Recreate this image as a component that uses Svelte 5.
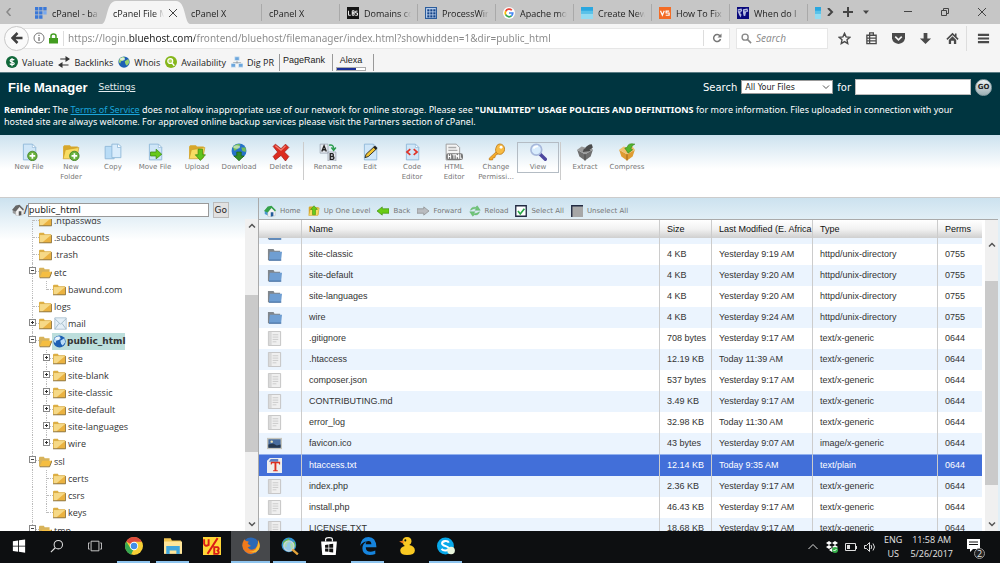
<script lang="ts">
	import { onMount } from 'svelte';

	let tabs = [
		{ title: 'cPanel - ba', icon: 'grid' },
		{ title: 'cPanel File M', active: true },
		{ title: 'cPanel X' },
		{ title: 'cPanel X' },
		{ title: 'Domains co', icon: 'lbs' },
		{ title: 'ProcessWir', icon: 'pw' },
		{ title: 'Apache mo', icon: 'google' },
		{ title: 'Create New', icon: 'sky' },
		{ title: 'How To Fix', icon: 'vs' },
		{ title: 'When do I', icon: 'map' }
	];

	let bookmarks = [
		{ label: 'Valuate', icon: 'dollar' },
		{ label: 'Backlinks', icon: 'swap' },
		{ label: 'Whois', icon: 'globe' },
		{ label: 'Availability', icon: 'avail' },
		{ label: 'Dig PR', icon: 'network' }
	];

	let tools = [
		[
			{ label: 'New File', icon: 'newfile' },
			{ label: 'New Folder', icon: 'newfolder' },
			{ label: 'Copy', icon: 'copy' },
			{ label: 'Move File', icon: 'move' },
			{ label: 'Upload', icon: 'upload' },
			{ label: 'Download', icon: 'download' },
			{ label: 'Delete', icon: 'delete' }
		],
		[
			{ label: 'Rename', icon: 'rename' },
			{ label: 'Edit', icon: 'edit' },
			{ label: 'Code Editor', icon: 'code' },
			{ label: 'HTML Editor', icon: 'html' },
			{ label: 'Change Permissi...', icon: 'key' },
			{ label: 'View', icon: 'view' }
		],
		[
			{ label: 'Extract', icon: 'extract' },
			{ label: 'Compress', icon: 'compress' }
		]
	];

	let actions = [
		{ label: 'Home', icon: 'home' },
		{ label: 'Up One Level', icon: 'up' },
		{ label: 'Back', icon: 'back' },
		{ label: 'Forward', icon: 'forward' },
		{ label: 'Reload', icon: 'reload' },
		{ label: 'Select All', icon: 'checked' },
		{ label: 'Unselect All', icon: 'unchecked' }
	];

	let tree = [
		{ name: '.htpasswds' },
		{ name: '.subaccounts' },
		{ name: '.trash' },
		{ name: 'etc', open: true },
		{ name: 'bawund.com', child: true, last: true },
		{ name: 'logs' },
		{ name: 'mail', more: true, icon: 'mail' },
		{ name: 'public_html', open: true, icon: 'world' },
		{ name: 'site', child: true, more: true },
		{ name: 'site-blank', child: true, more: true },
		{ name: 'site-classic', child: true, more: true },
		{ name: 'site-default', child: true, more: true },
		{ name: 'site-languages', child: true, more: true },
		{ name: 'wire', child: true, more: true, last: true },
		{ name: 'ssl', open: true },
		{ name: 'certs', child: true },
		{ name: 'csrs', child: true },
		{ name: 'keys', child: true, last: true },
		{ name: 'tmp', open: true }
	];

	const dir = 'httpd/unix-directory';
	const text = 'text/x-generic';

	let files = [
		{ name: '', size: '', date: '', type: '', perms: '', icon: 'dir' },
		{ name: 'site-classic', size: '4 KB', date: 'Yesterday 9:19 AM', type: dir, perms: '0755', icon: 'dir' },
		{ name: 'site-default', size: '4 KB', date: 'Yesterday 9:20 AM', type: dir, perms: '0755', icon: 'dir' },
		{ name: 'site-languages', size: '4 KB', date: 'Yesterday 9:20 AM', type: dir, perms: '0755', icon: 'dir' },
		{ name: 'wire', size: '4 KB', date: 'Yesterday 9:24 AM', type: dir, perms: '0755', icon: 'dir' },
		{ name: '.gitignore', size: '708 bytes', date: 'Yesterday 9:17 AM', type: text, perms: '0644', icon: 'doc' },
		{ name: '.htaccess', size: '12.19 KB', date: 'Today 11:39 AM', type: text, perms: '0644', icon: 'doc' },
		{ name: 'composer.json', size: '537 bytes', date: 'Yesterday 9:17 AM', type: text, perms: '0644', icon: 'doc' },
		{ name: 'CONTRIBUTING.md', size: '3.49 KB', date: 'Yesterday 9:17 AM', type: text, perms: '0644', icon: 'doc' },
		{ name: 'error_log', size: '32.98 KB', date: 'Today 11:30 AM', type: text, perms: '0644', icon: 'doc' },
		{ name: 'favicon.ico', size: '43 bytes', date: 'Yesterday 9:07 AM', type: 'image/x-generic', perms: '0644', icon: 'image' },
		{ name: 'htaccess.txt', size: '12.14 KB', date: 'Today 9:35 AM', type: 'text/plain', perms: '0644', icon: 'txt' },
		{ name: 'index.php', size: '2.36 KB', date: 'Yesterday 9:17 AM', type: text, perms: '0644', icon: 'doc' },
		{ name: 'install.php', size: '46.43 KB', date: 'Yesterday 9:17 AM', type: text, perms: '0644', icon: 'doc' },
		{ name: 'LICENSE.TXT', size: '18.68 KB', date: 'Yesterday 9:17 AM', type: text, perms: '0644', icon: 'doc' }
	];

	let apps = [
		{ name: 'Start', icon: 'windows', small: true },
		{ name: 'Search', icon: 'lens', small: true },
		{ name: 'Task View', icon: 'taskview', small: true },
		{ name: 'Chrome', icon: 'chrome', running: true },
		{ name: 'File Explorer', icon: 'explorer', running: true },
		{ name: 'Font tool', icon: 'vb' },
		{ name: 'Firefox', icon: 'firefox', running: true, active: true },
		{ name: 'Web search', icon: 'globesearch', running: true },
		{ name: 'Store', icon: 'store' },
		{ name: 'Edge', icon: 'edge', running: true },
		{ name: 'Cyberduck', icon: 'duck' },
		{ name: 'Skype', icon: 'skype', running: true }
	];

	let url = $state('https://login.bluehost.com/frontend/bluehost/filemanager/index.html?showhidden=1&dir=public_html');
	let path = $state('public_html');
	let selectedFile = $state('htaccess.txt');
	let selectedDir = $state('public_html');
	let treePane: HTMLElement;
	let filePane: HTMLElement;

	onMount(() => {
		treePane.scrollTop = 7;
		filePane.scrollTop = 15;
	});
</script>

{#snippet page(fill = '#cfe6f8')}
	<path d="M3 1h8l3 3v11H3z" {fill} stroke="#8fb8d8" stroke-width=".8" />
	<path d="M11 1v3h3z" fill="#fff" stroke="#8fb8d8" stroke-width=".6" />
{/snippet}

{#snippet goldFolder()}
	<path d="M1 3l1-1h5l1 1h6v10H1z" fill="#d8a72a" />
	<path d="M3 6l12-2-2 10H1z" fill="#f8dc62" stroke="#c99a25" stroke-width=".6" />
{/snippet}

{#snippet plus()}
	<circle cx="11" cy="11.5" r="4.2" fill="#69b13b" stroke="#3f7d22" stroke-width=".7" />
	<path d="M11 9v5M8.5 11.5h5" stroke="#fff" stroke-width="1.5" />
{/snippet}

{#snippet icon(name: string)}
	<svg class="icon" viewBox="0 0 16 16" aria-hidden="true">
		{#if name === 'grid'}
			<path d="M0 0h4.500v4.500H0zM5.500 0H10v4.500H5.500zM11 0h4.500v4.500H11zM0 5.500h4.500V10H0zM5.500 5.500H10V10H5.500zM0 11h4.500v4.500H0zM5.500 11H10v4.500H5.500z" fill="#3a78d8" />
			<path d="M11 5.500h4.500V10H11z" fill="#78a9ee" />
		{:else if name === 'lbs'}
			<path d="M0 0h16v16H0z" fill="#151515" />
			<path d="M2 5v6h3M7 5v6h2.500V8H7h2.500V5zM14 5.500h-2.500V8H14v3h-3" stroke="#fff" stroke-width="1.200" fill="none" />
		{:else if name === 'pw'}
			<path d="M0 0h16v16H0z" fill="#2c5d9c" />
			<path d="M1.500 1.500h13v13h-13z" fill="#c9dcf5" />
			<path d="M3 3h3v3H3zM7 3h3v3H7zM11 3h3v3h-3zM3 7h3v3H3zM7 7h3v3H7zM11 7h3v3h-3zM3 11h3v3H3zM7 11h3v3H7zM11 11h3v3h-3z" fill="#164487" />
		{:else if name === 'google'}
			<circle cx="8" cy="8" r="8" fill="#fff" />
			<g fill="none" stroke-width="2.300">
				<path d="M11.800 4.300A5 5 0 0 0 3.600 5.700" stroke="#ea4335" />
				<path d="M3.600 5.600a5 5 0 0 0 0 4.800" stroke="#fbbc05" />
				<path d="M3.600 10.300a5 5 0 0 0 7.700 1.500" stroke="#34a853" />
				<path d="M11.200 11.800A5 5 0 0 0 13 8H8" stroke="#4285f4" />
			</g>
		{:else if name === 'sky'}
			<path d="M0 0h16v16H0z" fill="#2aa7df" />
			<path d="M0 5h16v4H0z" fill="#58c2e9" />
			<path d="M0 9h16v7H0z" fill="#93dbf1" />
		{:else if name === 'vs'}
			<path d="M0 0h16v16H0z" fill="#f36c25" />
			<path d="M2 5l2.500 6L7 5M13.500 5.500H9.500V8h4v3H9" stroke="#fff" stroke-width="1.600" fill="none" />
		{:else if name === 'map'}
			<path d="M0 0h16v16H0z" fill="#0a0a7c" />
			<path d="M1 3l5-1 1 3-3 3 2 2-1 4-2-3-2-5zM8 3l6-1 1 4-3 1-1 5-2 0-1-4z" fill="#b5bbe0" />
			<path d="M2 5h3M10 5h3" stroke="#0a0a7c" />
		{:else if name === 'dollar'}
			<circle cx="8" cy="8" r="8" fill="#11683a" />
			<path d="M11 5.500C10 4 5.500 4 5.500 6.300S11 8 11 10s-4.500 2-6 .2M8 2.500v11" stroke="#fff" stroke-width="1.600" fill="none" />
		{:else if name === 'swap'}
			<path d="M3 4h8M5 12h9" stroke="#333" stroke-width="1.600" />
			<path d="M10 0l6 4-6 4zM6 8l-6 4 6 4z" fill="#333" />
		{:else if name === 'globe' || name === 'world'}
			<circle cx="8" cy="8" r="7.500" fill="#1c5fb4" />
			<path d="M2 4c3-3 6-3 7-2L7 6 4 7 3 10 1 8zM9 7l5-3 1 5-3 4-2-2z" fill={name === 'globe' ? '#9ad36b' : '#b9dcf7'} />
			<ellipse cx="6" cy="4" rx="3.500" ry="2" fill="#fff" opacity=".7" />
		{:else if name === 'avail'}
			<circle cx="8" cy="8" r="8" fill="#85b61b" />
			<circle cx="7" cy="6.700" r="3.300" stroke="#fff" stroke-width="1.600" fill="#b5da5e" />
			<path d="M9.500 9.500l3 3.500" stroke="#fff" stroke-width="2" />
		{:else if name === 'network'}
			<path d="M8 5v5M3 12V9h10v3" stroke="#7d8b96" fill="none" />
			<path d="M5 1h6v5H5zM0 10h6v5H0zM10 10h6v5h-6z" fill="#6ba6dd" stroke="#dbe8f3" />
		{:else if name === 'newfile'}
			{@render page()}
			{@render plus()}
		{:else if name === 'newfolder'}
			{@render goldFolder()}
			{@render plus()}
		{:else if name === 'copy'}
			<path d="M1 3h6l2 2v9H1z" fill="#b9dcf6" stroke="#8fb8d8" stroke-width=".8" />
			<path d="M7 1h6l2 2v10H7z" fill="#d9ecfb" stroke="#8fb8d8" stroke-width=".8" />
			<path d="M12 1v3h3" fill="#fff" stroke="#8fb8d8" stroke-width=".7" />
		{:else if name === 'move'}
			{@render page()}
			<path d="M4 8h5V5.500L14 10l-5 4v-2.500H4z" fill="#67c91b" stroke="#3d8b12" stroke-width=".7" />
		{:else if name === 'upload'}
			{@render goldFolder()}
			<path d="M9 5.500h4v5h2.500L11 15.500 6.500 10.500H9z" fill="#5fc41c" stroke="#3d8b12" stroke-width=".7" />
		{:else if name === 'download'}
			<circle cx="8" cy="7" r="6.600" fill="#2672c9" />
			<path d="M2.500 3.500c3-3 5-3 7-2L7 5 4 7zM10 4l4 0 0 4-3-1z" fill="#73bd56" />
			<ellipse cx="6" cy="3.500" rx="3" ry="1.500" fill="#fff" opacity=".5" />
			<path d="M6 8h4v3.500h2.500L8 15.800 3.500 11.500H6z" fill="#348d25" stroke="#1d6114" stroke-width=".6" />
		{:else if name === 'delete'}
			<path d="M3 1l5 4 4-4 3 3-4 4 4 4-3 4-4-5-5 4-2-3 4-4-4-5z" fill="#dc2c20" stroke="#9d1510" stroke-width=".6" />
			<path d="M3 2.500l5 4L12 2.500" stroke="#f48474" stroke-width="1" fill="none" />
		{:else if name === 'rename'}
			<path d="M1 1h7v8H1zM8 8h7v8H8z" fill="#e4e8ee" stroke="#9ca5b2" stroke-width=".7" />
			<path d="M2.500 7.500l2-5 2 5M3.200 6h2.600M10 9.500v5h2.300c1.300-.3 1.300-2.300 0-2.500H10h2c1-.3 1-2.300 0-2.500z" stroke="#222" stroke-width="1.200" fill="none" />
			<path d="M9 2q4-1 4 3M11 4l2 2.500L15 4" stroke="#2b9c4e" stroke-width="1.300" fill="none" />
		{:else if name === 'edit'}
			{@render page()}
			<path d="M3.500 13l1-3 7.500-7 2 2-7.500 7z" fill="#f2c532" stroke="#222" stroke-width=".8" />
			<path d="M11 4l2 2 1.500-1.500-2-2z" fill="#222" />
		{:else if name === 'code'}
			{@render page()}
			<path d="M6.500 5.500L3.500 8l3 2.500M9.500 5.500l3 2.500-3 2.500" stroke="#e03428" stroke-width="1.500" fill="none" />
		{:else if name === 'html'}
			<path d="M1 1h9l3 3v11H1z" fill="#f4f4f4" stroke="#999" stroke-width=".8" />
			<path d="M3 4h7M3 6.500h8" stroke="#aaa" stroke-width="1.200" />
			<rect x="1" y="9" width="15" height="6" rx="2" fill="#777" />
			<path d="M3 10v4M5 10v4M3 12h2M6.500 10.500h3M8 10.500V14M10 14v-3.500l1 1.500 1-1.500V14M13.500 10v3.500H15" stroke="#fff" stroke-width=".9" fill="none" />
		{:else if name === 'key'}
			<path d="M8.500 7.500L2 13.500V15h3l.5-2H7l.5-2L10 9.500" fill="#f5ab2b" stroke="#b97512" stroke-width=".6" />
			<path d="M9 2c2-2 5-1 6 1s1 4-1 6-5 1-6-1 0-4 1-6z" fill="#f8bb42" stroke="#b97512" stroke-width=".7" />
			<circle cx="12.500" cy="3.800" r="1.300" fill="#fff" />
		{:else if name === 'view'}
			<path d="M9.500 9.500l5 5" stroke="#4d479f" stroke-width="3" stroke-linecap="round" />
			<circle cx="6.500" cy="6" r="4.800" fill="#d8ecfd" stroke="#a8b9dc" stroke-width="1.500" />
			<path d="M4 5q1-2.500 4-2" stroke="#fff" stroke-width="1.500" fill="none" />
		{:else if name === 'extract' || name === 'compress'}
			{@const gold = name === 'compress'}
			<path d="M1 6l7 4 7-4-2 6-5 3.500L3 12z" fill={gold ? '#df9c32' : '#6f6f6f'} />
			<path d="M1 6l4-3 3 1 4-2 3 4-7 4z" fill={gold ? '#f0c06d' : '#999'} />
			<path d="M8 10v5.500" stroke={gold ? '#a8691c' : '#4d4d4d'} />
			{#if gold}
				<path d="M6 4.500L9 9l4-3-1.500-1Q12 2 15 1 9 -.5 8 4z" fill="#54b52d" stroke="#2f7c14" stroke-width=".5" />
			{:else}
				<path d="M6 8l1-3h1q2-4 6-4l1 3-3 2 1 1z" fill="#4b4b4b" />
			{/if}
		{:else if name === 'home' || name === 'roothome'}
			{@const root = name === 'roothome'}
			<path d="M1 8l4-5 4 5v7l-4-1-4-2z" fill={root ? '#999' : '#4b98cf'} />
			<path d="M5 9l5-6 5 5v6l-6 2-4-1z" fill="#f2f2f2" stroke="#aaa" stroke-width=".5" />
			<path d="M0 8l5-6 5-1 6 6-1.500 1.500L10 4 5 10z" fill={root ? '#666' : '#35a24b'} />
			<path d="M9 9.500h3.500v5L9 15.500z" fill={root ? '#555' : '#235c9b'} />
		{:else if name === 'up'}
			{@render goldFolder()}
			<path d="M8 1l4.500 5H10v7H6V6H3.500z" fill="#65ca1c" stroke="#3d8b12" stroke-width=".7" />
		{:else if name === 'back'}
			<path d="M0 8l7-5.500V5h9v6H7v2.500z" fill="#69cc14" stroke="#3c8d0c" stroke-width=".9" />
		{:else if name === 'forward'}
			<path d="M16 8L9 2.500V5H0v6h9v2.500z" fill="#b9bcc0" stroke="#888" stroke-width=".9" />
		{:else if name === 'reload'}
			<path d="M2 7q1-5 7-4l2-2 4 6-7 0 2-2Q6 4 2 7zM14 9q-1 5-7 4l-2 2-4-6h7l-2 2q4 1 8-2z" fill="#71c778" stroke="#4ca457" stroke-width=".5" />
		{:else if name === 'checked'}
			<path d="M1 1h14v14H1z" fill="#fff" stroke="#222b42" stroke-width="1.800" />
			<path d="M4 8l3 4 5.500-7" stroke="#28a745" stroke-width="2.200" fill="none" />
		{:else if name === 'unchecked'}
			<path d="M0 0h16v16H0z" fill="#a7a7a7" />
			<path d="M1 16V1h15" stroke="#222b42" stroke-width="1.800" fill="none" />
		{:else if name === 'folder'}
			<path d="M0 3l1-1h5l1 2h8v10H0z" fill="#dcae45" />
			<path d="M1 5h14v9H1z" fill="#f6d987" />
			<path d="M15 5v9H4z" fill="#eab241" />
			<path d="M0 14.500h15.500V5" stroke="#7d6027" fill="none" />
		{:else if name === 'openfolder'}
			<path d="M0 3l1-1h5l1 2h6v3L2 14H0z" fill="#d8b35a" />
			<path d="M4 7h12l-3 7H1z" fill="#f5be42" />
			<path d="M1 14.500h12L16 7" stroke="#7d6027" fill="none" />
		{:else if name === 'mail'}
			<path d="M1 1h14v14H1z" fill="#e4eff7" stroke="#a6bccb" />
			<path d="M1 2l7 7 7-7M1 15l5-7M15 15l-5-7" stroke="#a6bccb" stroke-width="1.200" fill="none" />
		{:else if name === 'dir'}
			<path d="M1 2h6l1 2h6v10H1z" fill="#80868c" />
			<path d="M3 5h13l-1 9.500H2z" fill="#6f9ed2" />
			<path d="M2 14h13.200" stroke="#41699c" />
		{:else if name === 'doc'}
			<path d="M1.500.5h13v15h-13z" fill="#efefef" stroke="#c2c2c2" />
			<path d="M2 1h3v14H2z" fill="#d9d9d9" />
			<path d="M6 4h6M6 6.500h6M6 9h6M6 11.500h4" stroke="#cbcbcb" />
		{:else if name === 'image'}
			<path d="M0 2h16v12H0z" fill="#c5c5bd" />
			<path d="M1.500 3.500h13v9h-13z" fill="#496d9e" />
			<path d="M1.500 9l5-1 4 2 4-1v3.500h-13z" fill="#26384f" />
			<circle cx="5" cy="6" r="1.300" fill="#f0e9bd" />
		{:else if name === 'txt'}
			<path d="M0 3l3-3h13v16H0z" fill="#eee" />
			<path d="M4 1h8v3H2z" fill="#5d80c5" />
			<path d="M4 4h10v3h-1l-.5-1.500H10V13h1.500v1h-5v-1H8V5.500H5.500L5 7H4z" fill="#dc3021" />
		{:else if name === 'windows'}
			<path d="M1 2.500l6-.8v6H1zM8 1.500l7-1v7.200H8zM1 8.500h6v6l-6-.8zM8 8.500h7v7.200l-7-1z" fill="#fff" />
		{:else if name === 'lens'}
			<circle cx="9.500" cy="6.500" r="4.800" stroke="#ddd" stroke-width="1.200" fill="none" />
			<path d="M6 10l-5 5" stroke="#ddd" stroke-width="1.300" />
		{:else if name === 'taskview'}
			<path d="M3.500 2.500h9v11h-9zM2 4.500H.5v7H2M14 4.500h1.500v7H14" stroke="#ddd" fill="none" />
		{:else if name === 'chrome'}
			<circle cx="8" cy="8" r="8" fill="#f8cf35" />
			<path d="M8 8L1.100 4A8 8 0 0 1 15 4.200H8z" fill="#dd4b3e" />
			<path d="M1.100 4L5 10l3 0-2.500 5.600A8 8 0 0 1 1.100 4z" fill="#36a853" />
			<circle cx="8" cy="8" r="3.700" fill="#fff" />
			<circle cx="8" cy="8" r="2.900" fill="#438ee8" />
		{:else if name === 'explorer'}
			<path d="M0 1h6l1 2h8v10H0z" fill="#f1c551" />
			<path d="M0 4h16v11H0z" fill="#ffe69a" />
			<path d="M2 8h12v7h-3v-3H5v3H2z" fill="#41a6dd" />
		{:else if name === 'vb'}
			<path d="M0 0h16v16H0z" fill="#ffd636" />
			<path d="M1 2v4q1 3 4 1V2M13 1L4 15M10 15V9h3q2 1.500 0 3 2 2 0 3z" stroke="#d91c16" stroke-width="1.700" fill="none" />
		{:else if name === 'firefox'}
			<circle cx="8" cy="8" r="7.500" fill="#2b68b6" />
			<path d="M2 2q-4 7 1 11 5 4 10 0 5-5 1-11 1 5-2 8-4 3-7-1l3-1-3-2 1-2Q3 4 2 2z" fill="#f07a1b" />
			<path d="M14 3q1 5-2 8-3 3-7 1 6 4 10-1 2-4-1-8z" fill="#f9b92e" />
		{:else if name === 'globesearch'}
			<circle cx="7" cy="7" r="6.500" fill="#3192d2" />
			<path d="M2 4l5-3 1 3-3 2 0 3-3-1zM8 6l4-2 1 4-4 4z" fill="#68bd45" />
			<circle cx="7" cy="8" r="4.500" fill="#d7edf7" fill-opacity=".6" stroke="#c5d4dc" stroke-width="1.200" />
			<path d="M10 11l5 4.500" stroke="#e3a33a" stroke-width="2" />
		{:else if name === 'store'}
			<path d="M1 4h14l-1 12H2z" fill="#fff" />
			<path d="M5 4V2q0-1.500 3-1.500T11 2v2" stroke="#fff" fill="none" />
			<path d="M4.500 7l3-.4v3h-3zM8.200 6.500l3.500-.5v3.600H8.200zM4.500 10.200h3v3l-3-.4zM8.200 10.200h3.500v3.500l-3.500-.4z" fill="#111" />
		{:else if name === 'edge'}
			<path d="M1 8Q2 0 8.500 0 15 0 15.500 9H6q0 4 4.500 4 2.500 0 4-1v3q-2 1-5 1Q3 16 3 10q0-4 4-6-4 0-6 4zm5-1.500h5Q11 3.500 8.500 3.500T6 6.500z" fill="#1684dd" />
		{:else if name === 'duck'}
			<path d="M4 4q0-4 4-4t4 4q0 2-2 3 5 1 5 5 0 4-7 4-6 0-6-4 0-3 4-4-2-1-2-4z" fill="#f9c922" />
			<path d="M1 4l4-1v3z" fill="#ee7c1f" />
			<circle cx="6.500" cy="3" r=".9" fill="#111" />
		{:else if name === 'skype'}
			<circle cx="7.500" cy="8" r="7.500" fill="#08a9ea" />
			<path d="M10.500 5C9.500 3 4.500 3.200 4.500 5.700S10.500 8 10.500 10s-4.500 3-6.500.5" stroke="#fff" stroke-width="1.800" fill="none" />
			<circle cx="12.500" cy="12" r="3.400" fill="#e8f5dc" />
		{/if}
	</svg>
{/snippet}

{#snippet scrollbar(top: number, size: number)}
	<div class="scrollbar">
		<button type="button" aria-label="Scroll up"><svg viewBox="0 0 8 8"><path d="M1 5.500l3-3 3 3" stroke-width="1.500" /></svg></button>
		<div class="track"><div class="thumb" style="top: {top}%; height: {size}%"></div></div>
		<button type="button" aria-label="Scroll down"><svg viewBox="0 0 8 8"><path d="M1 2.500l3 3 3-3" stroke-width="1.500" /></svg></button>
	</div>
{/snippet}

<div class="desktop">
	<div class="tabbar">
		<button class="tab-scroll" type="button" aria-label="Previous tabs">
			<svg class="line" viewBox="0 0 8 8"><path d="M5.500 0L2 4l3.500 4" stroke="#888" stroke-width="1.500" /></svg>
		</button>
		<div class="tabs">
			{#each tabs as tab}
				<button class="tab" class:active={tab.active} type="button">
					{#if tab.active}
						<svg class="tab-shape" viewBox="0 0 88 24" preserveAspectRatio="none"><path d="M0 24C6 22 4 1 14 1h60C84 1 82 22 88 24z" fill="#f5f5f5" /></svg>
					{/if}
					{#if tab.icon}{@render icon(tab.icon)}{/if}
					<span class="tab-title">{tab.title}</span>
					{#if tab.active}
						<svg class="line close" viewBox="0 0 8 8"><path d="M0 0l8 8M8 0L0 8" /></svg>
					{/if}
				</button>
			{/each}
			<button class="tab cut" type="button" aria-label="Next tab">{@render icon('sky')}</button>
		</div>
		<div class="tab-tools">
			<button type="button" aria-label="More tabs"><svg class="line bold" viewBox="0 0 8 8"><path d="M2 0l4 4-4 4" /></svg></button>
			<button type="button" aria-label="New tab"><svg class="line bold plus" viewBox="0 0 10 10"><path d="M5 0v10M0 5h10" /></svg></button>
			<button type="button" aria-label="List tabs"><svg class="line" viewBox="0 0 8 8"><path d="M1 2.500h6L4 6z" fill="#444" stroke="none" /></svg></button>
		</div>
		<div class="window-tools">
			<button type="button" aria-label="Minimize"><svg class="line" viewBox="0 0 8 8"><path d="M0 3.500h8" /></svg></button>
			<button type="button" aria-label="Restore"><svg class="line" viewBox="0 0 8 8"><path d="M.5 2.500h5v5h-5zM2.500 2.500v-2h5v5h-2" /></svg></button>
			<button type="button" aria-label="Close"><svg class="line" viewBox="0 0 8 8"><path d="M0 0l8 8M8 0L0 8" /></svg></button>
		</div>
	</div>

	<div class="navbar">
		<button class="go-back" type="button" aria-label="Back">
			<svg viewBox="0 0 12 12"><path d="M11.500 6H2M6.500 1L1.500 6l5 5" stroke="#3f3f3f" stroke-width="2.500" fill="none" /></svg>
		</button>
		<div class="urlbox">
			<svg class="info" viewBox="0 0 12 12"><circle cx="6" cy="6" r="5" stroke="#777" fill="none" /><path d="M6 5v4M6 2.800v1.300" stroke="#777" stroke-width="1.300" /></svg>
			<svg class="lock" viewBox="0 0 9 11"><path d="M2 5V3q0-2 2.500-2T7 3v2" stroke="#439d20" stroke-width="1.500" fill="none" /><path d="M0 5h9v5.500H0z" fill="#439d20" /></svg>
			<input class="url" aria-label="Address" bind:value={url} />
			<button class="refresh" type="button" aria-label="Reload page">
				<svg viewBox="0 0 10 10"><path d="M8 3A3.500 3.500 0 1 0 8.500 6" stroke="#777" stroke-width="1.500" fill="none" /><path d="M9.500.5v4h-4z" fill="#777" /></svg>
			</button>
		</div>
		<label class="searchbox">
			<svg viewBox="0 0 12 12"><circle cx="4.500" cy="4.500" r="3.300" stroke="#888" stroke-width="1.500" fill="none" /><path d="M7 7l4 4" stroke="#888" stroke-width="1.700" /></svg>
			<input placeholder="Search" aria-label="Search the web" />
		</label>
		<div class="nav-tools">
			<button type="button" aria-label="Bookmark"><svg viewBox="0 0 14 14"><path d="M7 1.500l1.700 3.700 4 .5-3 2.700.8 4L7 10.400l-3.500 2 .8-4-3-2.700 4-.5z" stroke="#4a4a4a" stroke-width="1.500" fill="none" /></svg></button>
			<button type="button" aria-label="Bookmarks list"><svg viewBox="0 0 14 14"><path d="M2 3.500h10v9H2zM2 6.500h10M2 9.500h10M5 3.500v9M5 3V1h4v2" stroke="#4a4a4a" stroke-width="1.400" fill="none" /></svg></button>
			<button type="button" aria-label="Pocket"><svg viewBox="0 0 14 14"><path d="M0 1h14v6q-1 5-7 6Q1 12 0 7z" fill="#4a4a4a" /><path d="M3.500 5L7 8.500 10.500 5" stroke="#f5f5f5" stroke-width="1.800" fill="none" /></svg></button>
			<button type="button" aria-label="Downloads"><svg viewBox="0 0 14 14"><path d="M5 1h4v6h4l-6 6-6-6h4z" fill="#4a4a4a" /></svg></button>
			<button type="button" aria-label="Home page"><svg viewBox="0 0 14 14"><path d="M1 8l6-6 6 6M10.500 1.500v4" stroke="#4a4a4a" stroke-width="1.700" fill="none" /><path d="M3 8.500l4-4 4 4V13H8.500V9.500h-3V13H3z" fill="#4a4a4a" /></svg></button>
			<button class="menu" type="button" aria-label="Menu"><svg viewBox="0 0 14 14"><path d="M1 3h12M1 7h12M1 11h12" stroke="#4a4a4a" stroke-width="2.400" /></svg></button>
		</div>
	</div>

	<div class="bookmarks">
		{#each bookmarks as mark}
			<a href="#top">{@render icon(mark.icon)}{mark.label}</a>
		{/each}
		<span class="rank">PageRank</span>
		<span class="alexa">Alexa<span class="meter"></span></span>
	</div>

	<header>
		<div class="title-row">
			<h1>File Manager</h1>
			<a class="settings" href="#settings">Settings</a>
			<form class="find">
				<label for="scope">Search</label>
				<span class="scope">
					<select id="scope"><option>All Your Files</option></select>
					<svg viewBox="0 0 8 8"><path d="M1 2.500l3 3 3-3" stroke="#555" fill="none" /></svg>
				</span>
				<label for="query">for</label>
				<input id="query" />
				<button type="button">GO</button>
			</form>
		</div>
		<p class="reminder">
			<b>Reminder:</b> The <a href="#terms">Terms of Service</a> does not allow inappropriate use of our network for online storage. Please see <b>"UNLIMITED" USAGE POLICIES AND DEFINITIONS</b> for more information. Files uploaded in connection with your<br />
			hosted site are always welcome. For approved online backup services please visit the Partners section of cPanel.
		</p>
	</header>

	<div class="toolbar">
		{#each tools as group}
			<div class="tool-group">
				{#each group as tool}
					<button class="tool" class:focused={tool.label === 'View'} type="button">
						{@render icon(tool.icon)}
						{tool.label}
					</button>
				{/each}
			</div>
		{/each}
	</div>

	<main>
		<aside>
			<form class="path">
				{@render icon('roothome')}
				<label for="path">/</label>
				<input id="path" bind:value={path} />
				<button type="button">Go</button>
			</form>
			<div class="pane">
				<ul class="tree" bind:this={treePane}>
					{#each tree as node}
						<li class:open={node.open}>
							<span class="guide" class:through={node.child}></span>
							{#if node.child}<span class="guide branch" class:last={node.last}>
								{#if node.more}<span class="toggle plus-sign"></span>{/if}
							</span>{:else if node.open || node.more}<span class="toggle root" class:plus-sign={node.more}></span>{/if}
							{@render icon(node.open ? 'openfolder' : 'folder')}
							<button
								class="node"
								class:selected={selectedDir === node.name}
								onclick={() => (selectedDir = node.name)}
								type="button"
							>
								{#if node.icon}{@render icon(node.icon)}{/if}{node.name}
							</button>
						</li>
					{/each}
				</ul>
				{@render scrollbar(22, 55)}
			</div>
		</aside>

		<section>
			<div class="actions">
				{#each actions as action}
					<button type="button">{@render icon(action.icon)}{action.label}</button>
				{/each}
			</div>
			<div class="pane files">
				<div class="file-list" bind:this={filePane}>
					<table>
						<thead>
							<tr>
								<th class="c-icon" aria-label="Icon"></th>
								<th>Name</th>
								<th class="c-size">Size</th>
								<th class="c-date">Last Modified (E. Africa S</th>
								<th class="c-type">Type</th>
								<th class="c-perms">Perms</th>
							</tr>
						</thead>
						<tbody>
							{#each files as file}
								<tr class:selected={file.name === selectedFile} onclick={() => (selectedFile = file.name)}>
									<td>{@render icon(file.icon)}</td>
									<td>{file.name}</td>
									<td>{file.size}</td>
									<td>{file.date}</td>
									<td>{file.type}</td>
									<td>{file.perms}</td>
								</tr>
							{/each}
						</tbody>
					</table>
				</div>
				{@render scrollbar(11, 77)}
			</div>
		</section>
	</main>

	<footer>
		{#each apps as app}
			<button
				class="app"
				class:small={app.small}
				class:running={app.running}
				class:active={app.active}
				aria-label={app.name}
				type="button"
			>
				{@render icon(app.icon)}
			</button>
		{/each}
		<div class="tray">
			<svg viewBox="0 0 12 12"><path d="M1.500 8L6 3.500 10.500 8" stroke="#ddd" fill="none" /></svg>
			<svg viewBox="0 0 12 12"><path d="M3 0l3 2-3 2-3-2zM9 0l3 2-3 2-3-2zM3 4l3 2-3 2-3-2zM9 4l3 2-3 2-3-2zM3 9l3-2 3 2-3 2z" fill="#fff" /><circle cx="9" cy="9" r="3" fill="#36b04a" /><path d="M7.500 9l1 1 2-2" stroke="#fff" fill="none" /></svg>
			<svg viewBox="0 0 12 12"><path d="M.5 2.500h10v7H.5zM11.500 5v3" stroke="#ddd" fill="none" /><path d="M2 4h3v4H2z" fill="#ddd" /></svg>
			<svg viewBox="0 0 12 12"><path d="M.5 4.500h2l3-3v9l-3-3h-2zM7 4q1.500 2 0 4M9 2.500q3 3.500 0 7" stroke="#ddd" fill="none" /></svg>
		</div>
		<div class="lang">ENG<br />US</div>
		<div class="clock">11:58 AM<br />5/26/2017</div>
		<button class="notices" type="button" aria-label="Notifications">
			<svg viewBox="0 0 18 18"><path d="M0 1h13v10H6l-3 3v-3H0z" fill="#fff" /><path d="M2 4h9M2 6.500h9" stroke="#111" /></svg>
			<span>2</span>
		</button>
	</footer>
</div>

<style>
	:global(body) {
		background: #fff;
		overflow: hidden;
	}

	.desktop {
		display: flex;
		flex-direction: column;
		height: 100vh;
		font-family: 'Open Sans', 'Noto Sans', sans-serif;
		font-size: 9px;
		color: #222;
	}

	button,
	input,
	select {
		font: inherit;
		color: inherit;
		box-sizing: border-box;
		margin: 0;
		outline: none;
	}

	button {
		display: flex;
		align-items: center;
		justify-content: center;
		padding: 0;
		border: 0;
		background: none;
		white-space: nowrap;
	}

	svg {
		display: block;
		flex: none;
	}

	.icon {
		width: 12px;
		height: 12px;
	}

	.line {
		width: 8px;
		height: 8px;
		stroke: #444;
		fill: none;
	}

	.line.bold {
		stroke-width: 2;
	}

	.line.plus {
		width: 10px;
		height: 10px;
	}

	/* browser chrome */
	.tabbar {
		display: flex;
		flex: none;
		height: 24px;
		background: #c6c6c6;
	}

	.tab-scroll {
		width: 17px;
		margin-right: 11px;
	}

	.tabs {
		display: flex;
		flex: 1;
		min-width: 0;
		overflow: hidden;
	}

	.tab {
		position: relative;
		flex: 0 0 78px;
		min-width: 0;
		justify-content: flex-start;
		gap: 5px;
		padding: 2px 7px 0;
		background: linear-gradient(#a9a9a9, #a9a9a9) right 4px / 1px 17px no-repeat;
	}

	.tab:first-child,
	.tab.active {
		background: none;
	}

	.tab.active {
		z-index: 1;
	}

	.tab-shape {
		position: absolute;
		left: -4px;
		top: 0;
		width: 88px;
		height: 24px;
	}

	.tab-title {
		position: relative;
		flex: 1;
		min-width: 0;
		overflow: hidden;
		text-align: left;
		mask-image: linear-gradient(to right, #000 80%, transparent);
	}

	.close {
		position: relative;
	}

	.cut {
		flex-basis: 15px;
		padding-right: 0;
		overflow: hidden;
	}

	.tab-tools,
	.window-tools {
		display: flex;
	}

	.tab-tools button {
		width: 18px;
	}

	.window-tools {
		margin-left: 14px;
	}

	.window-tools button {
		width: 37px;
	}

	.navbar {
		display: flex;
		align-items: center;
		flex: none;
		height: 28px;
		background: #f5f5f5;
	}

	.go-back {
		position: relative;
		z-index: 1;
		flex: none;
		width: 25px;
		height: 25px;
		margin-left: 4px;
		border: 1px solid #c8c8c8;
		border-radius: 50%;
		background: #fafafa;
	}

	.go-back svg {
		width: 12px;
		height: 12px;
	}

	.urlbox {
		display: flex;
		align-items: center;
		flex: 1;
		height: 21px;
		margin-left: -8px;
		padding-left: 11px;
		border: 1px solid #e6e6e6;
		box-sizing: border-box;
		background: #fff;
	}

	.info {
		width: 12px;
		height: 12px;
	}

	.lock {
		width: 9px;
		height: 11px;
		margin: 0 5px 0 4px;
	}

	/* the host part of the address is darker than the rest */
	.url {
		flex: 1;
		min-width: 0;
		height: 15px;
		padding: 0 4px;
		border: 0;
		border-left: 1px solid #ddd;
		font-family: 'Noto Sans', sans-serif;
		font-size: 10px;
		-webkit-text-fill-color: transparent;
		background: linear-gradient(to right, #888 65px, #222 65px, #222 131px, #888 131px);
		-webkit-background-clip: text;
		background-clip: text;
	}

	.refresh {
		width: 26px;
		height: 16px;
		border-left: 1px solid #ddd;
	}

	.refresh svg {
		width: 10px;
		height: 10px;
	}

	.searchbox {
		display: flex;
		align-items: center;
		gap: 4px;
		width: 92px;
		height: 21px;
		margin-left: 6px;
		padding-left: 4px;
		border: 1px solid #e6e6e6;
		box-sizing: border-box;
		background: #fff;
	}

	.searchbox svg {
		width: 11px;
		height: 11px;
	}

	.searchbox input {
		width: 60px;
		padding: 0;
		border: 0;
		font-size: 10px;
		font-style: italic;
	}

	.searchbox input::placeholder {
		color: #888;
	}

	.nav-tools {
		display: flex;
		padding-left: 3px;
	}

	.nav-tools button {
		width: 27px;
		height: 25px;
	}

	.nav-tools svg {
		width: 13px;
		height: 13px;
	}

	.nav-tools .menu {
		width: 34px;
		border-left: 1px solid #ddd;
	}

	.bookmarks {
		display: flex;
		align-items: center;
		flex: none;
		height: 20px;
		padding-left: 6px;
		background: #f5f5f5;
		gap: 5px;
	}

	.bookmarks a {
		display: flex;
		align-items: center;
		gap: 4px;
		color: #222;
		text-decoration: none;
	}

	.rank,
	.alexa {
		height: 17px;
		padding: 0 7px 0 3px;
		border-left: 1px solid #999;
		font-family: 'Liberation Sans', Arial, sans-serif;
		line-height: 13px;
	}

	.alexa {
		display: flex;
		flex-direction: column;
		align-items: center;
		margin-left: -5px;
		border-right: 1px solid #999;
	}

	.meter {
		width: 30px;
		height: 4px;
		border: 1px solid #aaa;
		box-sizing: border-box;
		background: linear-gradient(to right, #1b2f9b 19px, #fff 19px);
	}

	/* page header */
	header {
		flex: none;
		padding: 0 8px 7px;
		border-top: 1px solid #5a7c84;
		background: #003540;
		color: #fff;
		font-family: 'DejaVu Sans', Verdana, sans-serif;
		overflow: hidden;
	}

	.title-row {
		display: flex;
		align-items: center;
		height: 28px;
	}

	h1 {
		margin: 0 11px 0 0;
		font: bold 13px 'Liberation Sans', Arial, sans-serif;
	}

	.settings {
		color: #e4ecee;
	}

	.find {
		display: flex;
		align-items: center;
		gap: 4px;
		margin-left: auto;
		font-size: 10px;
	}

	.scope {
		position: relative;
		display: flex;
	}

	.scope svg {
		position: absolute;
		right: 3px;
		top: 3px;
		width: 8px;
		height: 8px;
		pointer-events: none;
	}

	.find select {
		appearance: none;
		width: 92px;
		height: 14px;
		padding: 0 3px;
		border: 1px solid #999;
		background: #fff;
		color: #222;
		font-size: 8px;
	}

	.find input {
		width: 116px;
		height: 16px;
		border: 1px solid #bbb;
		background: #fff;
		color: #222;
	}

	.find button {
		width: 17px;
		height: 17px;
		border: 1px solid #8ba0a5;
		border-radius: 50%;
		background: linear-gradient(#eef2f3, #9db0b5);
		color: #222;
		font-size: 7px;
		font-weight: bold;
	}

	.reminder {
		margin: 3px -4px 0;
		font-family: 'Noto Sans', Verdana, sans-serif;
		line-height: 12px;
		white-space: nowrap;
	}

	.reminder a {
		color: #1ba5dc;
	}

	/* toolbar */
	.toolbar {
		display: flex;
		flex: none;
		height: 62px;
		padding: 7px 8px 0;
		box-sizing: border-box;
		background: linear-gradient(#cce2ef, #fff 34px);
	}

	.tool-group {
		display: flex;
		align-items: flex-start;
		height: 38px;
	}

	.tool-group + .tool-group {
		margin-left: 1px;
		padding-left: 3px;
		border-left: 1px solid #ccc;
	}

	.tool {
		flex-direction: column;
		width: 42px;
		padding: 0 1px;
		border: 1px solid transparent;
		color: #777;
		font-family: 'DejaVu Sans', Verdana, sans-serif;
		font-size: 7px;
		line-height: 10px;
		white-space: normal;
	}

	.tool.focused {
		border-color: #b4bcc4;
	}

	.tool .icon {
		width: 18px;
		height: 18px;
		margin-bottom: 1px;
	}

	/* panes */
	main {
		display: flex;
		flex: 1;
		min-height: 0;
		border-top: 1px solid #ccc;
		background: linear-gradient(#cce2ef, #fff 42px);
	}

	aside {
		display: flex;
		flex-direction: column;
		width: 258px;
		flex: none;
	}

	section {
		display: flex;
		flex-direction: column;
		flex: 1;
		min-width: 0;
		padding-right: 2px;
		border-left: 1px solid #aaa;
		background: linear-gradient(#cce2ef, #e2eff6 22px);
	}

	.path {
		display: flex;
		align-items: center;
		flex: none;
		height: 21px;
		padding: 2px 0 0 12px;
		box-sizing: border-box;
		font-family: 'DejaVu Sans', Verdana, sans-serif;
	}

	.path label {
		font-size: 11px;
	}

	.path input {
		width: 181px;
		height: 14px;
		padding: 0;
		border: 1px solid #999;
		background: #fff;
	}

	.path button {
		width: 16px;
		height: 16px;
		margin-left: 4px;
		border: 1px solid #bbb;
		background: #e1e1e1;
	}

	.pane {
		display: flex;
		flex: 1;
		min-height: 0;
	}

	.tree {
		flex: 1;
		margin: 0;
		padding: 0 0 0 25px;
		overflow: hidden;
		list-style: none;
		color: #333;
	}

	.tree li {
		position: relative;
		display: flex;
		align-items: center;
		height: 17px;
	}

	.tree li.open {
		height: 18px;
	}

	.tree .icon {
		width: 13px;
		height: 13px;
	}

	.guide {
		position: relative;
		flex: none;
		align-self: stretch;
		width: 14px;
	}

	.guide::before {
		content: '';
		position: absolute;
		left: 7px;
		top: 0;
		height: 100%;
		border-left: 1px dotted #bbb;
	}

	.guide::after {
		content: '';
		position: absolute;
		left: 8px;
		right: 0;
		top: 8px;
		border-top: 1px dotted #bbb;
	}

	.guide.through::after {
		display: none;
	}

	.guide.last::before {
		height: 50%;
	}

	.toggle {
		position: absolute;
		left: 4px;
		top: 4px;
		z-index: 1;
		width: 7px;
		height: 7px;
		border: 1px solid #888;
		box-sizing: border-box;
		background: linear-gradient(#444, #444) center / 3px 1px no-repeat #fff;
	}

	.toggle.plus-sign {
		background:
			linear-gradient(#333, #333) center / 3px 1px no-repeat,
			linear-gradient(#333, #333) center / 1px 3px no-repeat,
			#fff;
	}

	.node {
		gap: 1px;
		height: 17px;
		padding-left: 2px;
	}

	.node.selected {
		padding: 0 0 0 1px;
		background: #bcdedc;
		font-family: 'DejaVu Sans', Verdana, sans-serif;
		font-weight: bold;
	}

	.scrollbar {
		display: flex;
		flex-direction: column;
		width: 13px;
		flex: none;
		background: #f0f0f0;
	}

	.scrollbar button {
		height: 14px;
	}

	.scrollbar svg {
		width: 8px;
		height: 8px;
		stroke: #555;
		fill: none;
	}

	.track {
		position: relative;
		flex: 1;
	}

	.thumb {
		position: absolute;
		left: 0;
		right: 0;
		background: #cacaca;
	}

	.actions {
		display: flex;
		align-items: center;
		flex: none;
		gap: 7px;
		height: 21px;
		padding: 4px 0 0 5px;
		box-sizing: border-box;
		color: #777;
		font-family: 'DejaVu Sans', Verdana, sans-serif;
		font-size: 7px;
	}

	.actions button {
		gap: 4px;
	}

	.files {
		border-top: 1px solid #aaa;
		background: #fff;
		font-family: 'Liberation Sans', Arial, sans-serif;
	}

	.file-list {
		flex: 1;
		min-width: 0;
		margin-right: 3px;
		overflow: hidden;
	}

	.files .scrollbar {
		padding-top: 18px;
	}

	table {
		width: 100%;
		table-layout: fixed;
		border-spacing: 0;
		color: #333;
	}

	th {
		position: sticky;
		top: 0;
		z-index: 1;
		height: 18px;
		background: linear-gradient(#fff, #f2f2f2 50%, #cfcfcf);
		font-weight: normal;
		text-align: left;
		color: #111;
	}

	th,
	td {
		padding: 0 0 0 7px;
		border-right: 1px solid #ccc;
		box-sizing: border-box;
		overflow: hidden;
		white-space: nowrap;
	}

	th:last-child,
	td:last-child {
		border-right: 0;
	}

	td {
		height: 21px;
		line-height: 15px;
	}

	td .icon {
		width: 15px;
		height: 15px;
		margin-left: 1px;
	}

	tbody tr:nth-child(odd) {
		background: #ebf4fe;
	}

	tbody tr.selected {
		background: #426fd9;
		color: #fff;
	}

	tbody tr.selected td {
		height: 22px;
		border-top: 1px solid #91b0ee;
	}

	.c-icon {
		width: 43px;
	}

	.c-size {
		width: 52px;
	}

	.c-date {
		width: 101px;
	}

	.c-type {
		width: 125px;
	}

	.c-perms {
		width: 44px;
	}

	/* taskbar */
	footer {
		display: flex;
		flex: none;
		height: 32px;
		background: #0d0f11;
		color: #e6e6e6;
	}

	.app {
		width: 39px;
		border-bottom: 2px solid transparent;
	}

	.app.small {
		width: 38px;
	}

	.app .icon {
		width: 18px;
		height: 18px;
	}

	.app.small .icon {
		width: 14px;
		height: 14px;
	}

	.app.running {
		width: 33px;
		margin: 0 3px;
		border-color: #8ec4ee;
	}

	.app.active {
		width: 39px;
		margin: 0;
		background: #46484b;
	}

	.tray {
		display: flex;
		align-items: center;
		gap: 7px;
		margin-left: auto;
	}

	.tray svg {
		width: 12px;
		height: 12px;
	}

	.lang,
	.clock {
		padding-top: 2px;
		margin-left: 8px;
		line-height: 14px;
		text-align: center;
	}

	.notices {
		position: relative;
		width: 18px;
		margin: 0 15px 0 14px;
	}

	.notices svg {
		width: 18px;
		height: 18px;
	}

	.notices span {
		position: absolute;
		right: 0;
		bottom: 4px;
		width: 11px;
		height: 11px;
		border: 1px solid #999;
		border-radius: 50%;
		box-sizing: border-box;
		background: #222;
		line-height: 9px;
	}
</style>
